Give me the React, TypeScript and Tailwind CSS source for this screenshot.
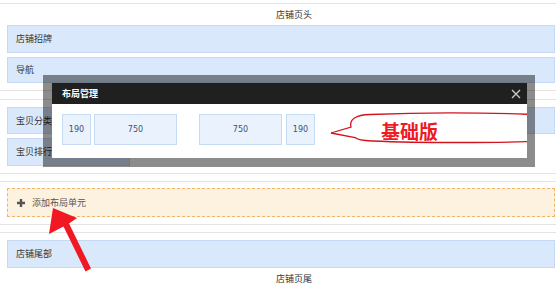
import React from "react";

const cjk = "font-['Noto_Sans_CJK_SC','Noto_Sans',sans-serif]";

function Row({ label, className = "" }: { label?: string; className?: string }) {
  return (
    <div
      className={`flex items-center border border-[#c4daf4] bg-[#d9e8fb] pl-[8px] text-[9px] text-[#333] ${className}`}
    >
      {label}
    </div>
  );
}

function Cell({ value, w }: { value: string; w: string }) {
  return (
    <div
      className={`flex h-[31px] items-center justify-center border border-[#c6dcf4] bg-[#eaf3fd] font-['DejaVu_Sans',sans-serif] text-[8px] text-[#3d5274] ${w}`}
    >
      {value}
    </div>
  );
}

function Callout() {
  // speech bubble, body-relative coords (body origin at page 52,104)
  return (
    <div className="absolute left-[276px] top-[6px] h-[42px] w-[230px]">
      <svg width="230" height="42" viewBox="276 6 230 42" className="absolute inset-0">
        <path
          d="M299 23 C297 15 304 11 318 10.5 C378 8 448 9 493 11 L493 37 C448 39 368 39 320 37 C310 36.5 305 35.5 303 33.5 L279 29 Z"
          fill="#fff"
          stroke="#d4141c"
          strokeWidth="1.3"
        />
      </svg>
      <span className={`absolute left-[53px] top-[8px] text-[19px] leading-[26px] font-bold text-[#ee1a24] ${cjk}`}>
        基础版
      </span>
    </div>
  );
}

function LayoutModal() {
  return (
    <div className="absolute left-[43px] top-[75px] h-[92px] w-[492px] bg-black/45 pb-[9px] pl-[9px] pr-[8px] pt-[8px]">
      <div className="flex h-full flex-col overflow-hidden bg-white">
        <div className="flex h-[21px] shrink-0 items-center justify-between bg-[#202020] pl-[10px] pr-[6px]">
          <span className="text-[9px] font-bold text-white">布局管理</span>
          <svg width="10" height="10" viewBox="0 0 10 10">
            <path d="M1 1 L9 9 M9 1 L1 9" stroke="#c8c8c8" strokeWidth="1.4" />
          </svg>
        </div>
        <div className="relative flex-1">
          <div className="flex pl-[10px] pt-[10px]">
            <Cell value="190" w="w-[29px]" />
            <Cell value="750" w="ml-[3px] w-[83px]" />
            <Cell value="750" w="ml-[22px] w-[83px]" />
            <Cell value="190" w="ml-[4px] w-[29px]" />
          </div>
          <Callout />
        </div>
      </div>
    </div>
  );
}

function Arrow() {
  return (
    <svg
      width="50"
      height="72"
      viewBox="0 0 50 72"
      className="pointer-events-none absolute left-[45px] top-[204px]"
    >
      <polygon
        points="8,4 32,14 24,19.5 46,64.5 40.5,67.5 18.5,22.5 4,30"
        fill="#f01822"
      />
    </svg>
  );
}

export default function App() {
  return (
    <div className={`relative h-[289px] w-[558px] overflow-hidden bg-white ${cjk}`}>
      {/* header */}
      <div className="mt-[3px] w-[556px] border-y border-[#e4e4e4] pb-[7px] pl-[7px] pr-[1px]">
        <div className="flex h-[21px] items-center justify-center pl-[26px] text-[9px] text-[#333]">店铺页头</div>
        <Row label="店铺招牌" className="h-[28px]" />
        <Row label="导航" className="mt-[4px] h-[26px]" />
      </div>

      {/* body columns */}
      <div className="mt-[8px] w-[556px] border-y border-[#e4e4e4] pb-[7px] pl-[7px] pr-[1px] pt-[7px]">
        <div className="flex gap-[6px]">
          <div className="flex w-[123px] flex-col gap-[4px]">
            <Row label="宝贝分类" className="h-[27px]" />
            <Row label="宝贝排行" className="h-[28px]" />
          </div>
          <div className="flex flex-1 flex-col">
            <Row className="h-[27px]" />
          </div>
        </div>
      </div>

      {/* add unit */}
      <div className="mt-[7px] w-[556px] border-y border-[#e4e4e4] pb-[7px] pl-[7px] pr-[1px] pt-[6px]">
        <div className="flex h-[29px] items-center gap-[7px] border border-dashed border-[#f5b463] bg-[#fdf1e0] pl-[9px] text-[9px] text-[#555]">
          <svg width="8" height="8" viewBox="0 0 8 8">
            <path d="M4 0 V8 M0 4 H8" stroke="#555" strokeWidth="2.4" />
          </svg>
          <span>添加布局单元</span>
        </div>
      </div>

      {/* footer */}
      <div className="mt-[7px] w-[556px] border-t border-[#e4e4e4] pl-[7px] pr-[1px] pt-[7px]">
        <Row label="店铺尾部" className="h-[28px]" />
        <div className="flex h-[21px] items-center justify-center pl-[26px] text-[9px] text-[#333]">店铺页尾</div>
      </div>

      <LayoutModal />
      <Arrow />
    </div>
  );
}
